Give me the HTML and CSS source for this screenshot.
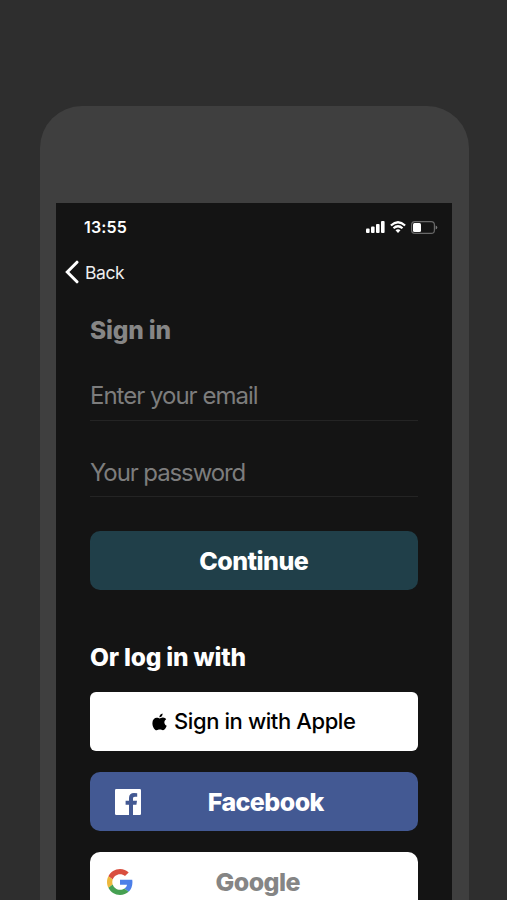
FILE: index.html
```html
<!DOCTYPE html>
<html lang="en">
<head>
<meta charset="utf-8">
<title>Sign in</title>
<link rel="stylesheet" href="styles.css">
</head>
<body>
<div class="phone">
  <main class="screen">
    <header class="status">
      <span class="time">13:55</span>
      <div class="indicators">
        <svg class="signal" viewBox="0 0 19 12"><rect x="0" y="7.6" width="3.6" height="4.4" rx="1"/><rect x="5" y="5.6" width="3.6" height="6.4" rx="1"/><rect x="10" y="3" width="3.6" height="9" rx="1"/><rect x="15" y="0" width="3.6" height="12" rx="1"/></svg>
        <svg class="wifi" viewBox="0 0 16 12"><path d="M.9 4.5Q8-2 15.1 4.5M3.5 7.3Q8 3.2 12.5 7.3" fill="none" stroke="#fff" stroke-width="2.2"/><path d="M5.5 9.3Q8 7.2 10.5 9.3L8 12Z"/></svg>
        <svg class="battery" viewBox="0 0 27 13"><rect x=".6" y=".6" width="22.8" height="11.8" rx="3.2" fill="none" stroke="#686868" stroke-width="1.2"/><rect x="2" y="2" width="8" height="9" rx="1.5"/><path d="M24.6 4.4Q26.3 5 26.3 6.5T24.6 8.6Z" fill="#777"/></svg>
      </div>
    </header>
    <nav class="nav">
      <a class="back"><svg viewBox="0 0 14 24"><path d="M12 2.2 2.3 12 12 21.8" fill="none" stroke="#fff" stroke-width="3" stroke-linecap="round"/></svg><span>Back</span></a>
    </nav>
    <section class="form">
      <h1 class="title">Sign in</h1>
      <div class="field"><span class="email">Enter your email</span></div>
      <div class="field"><span class="password">Your password</span></div>
      <button class="btn continue"><span>Continue</span></button>
      <h2 class="alt">Or log in with</h2>
      <div class="providers">
        <button class="btn apple">
          <svg viewBox="0 0 15 18"><path d="M10.6 0.5C10.8 2.5 9.2 4.4 7.4 4.3 7.2 2.5 8.8.8 10.6.5ZM7.6 5.5C8.3 5.5 9.4 4.5 11 4.6 12.4 4.7 13.5 5.2 14.2 6.3 11.5 8 11.9 11.6 14.7 12.8 14 14.8 12.6 17.3 11 17.3 9.8 17.3 9.2 16.6 7.8 16.6S5.7 17.3 4.6 17.3C2.7 17.3.4 13.8.4 10.2.4 6.7 2.5 4.8 4.7 4.8 6.1 4.8 7 5.5 7.6 5.5Z"/></svg>
          <span>Sign in with Apple</span>
        </button>
        <button class="btn facebook">
          <svg viewBox="0 0 26 26"><rect width="26" height="26" rx="1.2" fill="#fff"/><path d="M14 26V15.7H10.6V11.8H14V9C14 5.8 15.9 4 19 4L22.2 4.2V7.7H20C18.4 7.7 18 8.5 18 9.7V11.8H22L21.4 15.7H18V26Z" fill="#435993"/></svg>
          <span>Facebook</span>
        </button>
        <button class="btn google">
          <svg viewBox="0 0 48 48"><path fill="#d94f3f" d="M24 9.5c3.54 0 6.71 1.22 9.21 3.6l6.85-6.85C35.9 2.38 30.47 0 24 0 14.62 0 6.51 5.38 2.56 13.22l7.98 6.19C12.43 13.72 17.74 9.5 24 9.5z"/><path fill="#4c7fe8" d="M46.98 24.55c0-1.57-.15-3.09-.38-4.55H24v9.02h12.94c-.58 2.96-2.26 5.48-4.78 7.18l7.73 6c4.51-4.18 7.09-10.36 7.09-17.65z"/><path fill="#edb83c" d="M10.53 28.59c-.48-1.45-.76-2.99-.76-4.59s.27-3.14.76-4.59l-7.98-6.19C.92 16.46 0 20.12 0 24s.92 7.54 2.56 10.78z"/><path fill="#46a052" d="M24 48c6.48 0 11.93-2.13 15.89-5.81l-7.73-6c-2.15 1.45-4.92 2.3-8.16 2.3-6.26 0-11.57-4.22-13.47-9.91l-7.98 6.19C6.51 42.62 14.62 48 24 48z"/></svg>
          <span>Google</span>
        </button>
      </div>
    </section>
  </main>
</div>
</body>
</html>
```
FILE: styles.css
```css
* { box-sizing: border-box; }
html { height: 100%; overflow: hidden; }
body {
  margin: 0;
  height: 100%;
  overflow: hidden;
  padding: 106px 38.5px 0 39.5px;
  background: #2e2e2e;
  color: #fff;
  font-family: Inter, "Liberation Sans", sans-serif;
}
svg { display: block; flex: none; }
.phone {
  height: 794px;
  padding: 97px 17px 0 16.5px;
  border-radius: 42px 42px 0 0;
  background: #3f3f3f;
}
.screen { height: 697px; overflow: hidden; background: #141414; }
.status {
  display: flex;
  align-items: center;
  justify-content: space-between;
  height: 48px;
  padding: 0 14px 0 28px;
}
.time { font-size: 16px; font-weight: 600; letter-spacing: 0.15px; }
.indicators { display: flex; align-items: center; gap: 5px; fill: #fff; }
.signal { width: 19px; height: 12px; }
.wifi { width: 16px; height: 12px; }
.battery { width: 27px; height: 13px; }
.nav { display: flex; align-items: center; height: 42px; padding-left: 9px; }
.back { display: flex; align-items: center; gap: 6px; font-size: 17.5px; letter-spacing: -0.4px; color: #eee; }
.back span { padding-top: 1px; }
.back svg { width: 14px; height: 24px; }
.form { padding: 15px 34px 0; }
.title, .alt { margin: 0; font-size: 24.5px; font-weight: 800; line-height: 44px; letter-spacing: -0.2px; }
.title { color: #868686; margin-bottom: 18px; }
.field {
  height: 51px;
  margin-bottom: 25px;
  border-bottom: 1px solid #242424;
  color: #7d7d7d;
  font-size: 24px;
  line-height: 52px;
}
.field + .field { line-height: 53px; }
.email { letter-spacing: -1px; }
.password { letter-spacing: -1.1px; }
.btn {
  display: flex;
  align-items: center;
  justify-content: center;
  width: 100%;
  height: 59px;
  padding: 0;
  border: 0;
  border-radius: 10px;
  color: #fff;
  font: 800 25px Inter, "Liberation Sans", sans-serif;
  letter-spacing: -0.55px;
}
.continue { margin-top: 34px; background: #203f49; }
.continue span { padding-top: 1px; }
.alt { margin: 45px 0 13px; }
.providers { display: grid; gap: 21px; }
.apple { gap: 7px; border-radius: 6px; background: #fff; color: #000; font-size: 22px; font-weight: 500; letter-spacing: -0.4px; }
.apple span { padding-bottom: 2px; }
.apple svg { width: 15px; height: 18px; }
.facebook, .google { display: grid; grid-template-columns: 54px 1fr 30px; justify-items: center; }
.facebook { background: #435993; }
.facebook svg { width: 26px; height: 26px; margin-left: 22px; }
.google { grid-template-columns: 54px 1fr 46px; background: #fff; color: #858585; }
.google svg { width: 26px; height: 26px; margin-left: 5px; }
```
